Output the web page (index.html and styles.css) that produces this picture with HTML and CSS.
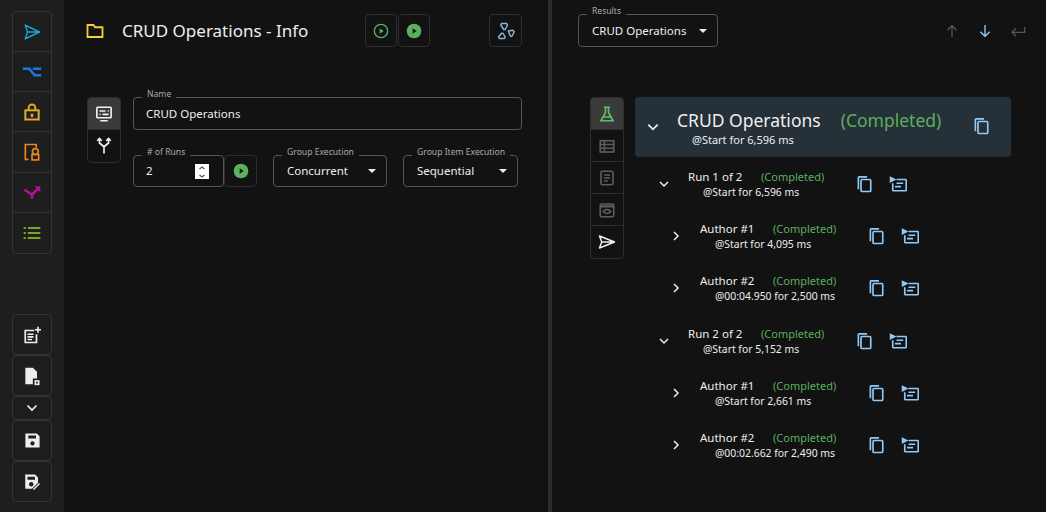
FILE: index.html
```html
<!DOCTYPE html>
<html lang="en">
<head>
  <meta charset="UTF-8">
  <title>CRUD Operations - Info</title>
  <link rel="stylesheet" href="styles.css">
</head>
<body>
  <aside class="sidebar">
    <div class="btn-stack">
      <button class="side-btn"><svg width="18" height="18" viewBox="0 0 24 24" fill="none" stroke="#1da1d6" stroke-width="1.9" stroke-linejoin="round"><path d="M3 3l19 9-19 9 3-9zM6 12h16"/></svg></button>
      <button class="side-btn"><svg width="20" height="20" viewBox="0 0 24 24" fill="none" stroke="#1976e0" stroke-width="3"><path d="M1 8h8l6 8h8M13 8h10"/></svg></button>
      <button class="side-btn"><svg width="20" height="20" viewBox="0 0 24 24" fill="none" stroke="#e0a92e" stroke-width="2.400"><rect x="4" y="10" width="16" height="11"/><path d="M8 10V7a4 4 0 0 1 8 0v3"/><path d="M12 14v4" stroke-width="3"/></svg></button>
      <button class="side-btn tall"><svg width="20" height="20" viewBox="0 0 24 24" fill="none" stroke="#e8861a" stroke-width="2"><path d="M8 21H4V3h13v4"/><circle cx="16" cy="11.500" r="3.500"/><rect x="12" y="15" width="8" height="6.500"/></svg></button>
      <button class="side-btn"><svg width="20" height="20" viewBox="0 0 24 24" fill="none" stroke="#b5109a" stroke-width="3"><path d="M3 8l9 6v5M12 14l8-8"/><path d="M15 4h7v7z" fill="#b5109a" stroke="none"/></svg></button>
      <button class="side-btn"><svg width="20" height="20" viewBox="0 0 24 24" fill="none" stroke="#7fa51c" stroke-width="2.400"><path d="M7 6h15M7 12h15M7 18h15M2 6h2.500M2 12h2.500M2 18h2.500"/></svg></button>
    </div>
    <div class="side-bottom">
      <button class="side-btn single"><svg width="18" height="18" viewBox="0 0 24 24" fill="none" stroke="#eee" stroke-width="2.200"><path d="M15 6H3v16h15V11M6 11h8M6 14.500h8M6 18h6M20 1v8M16 5h8"/></svg></button>
      <button class="side-btn single"><svg width="20" height="20" viewBox="0 0 24 24" fill="#eee"><path d="M4 2h9l5 5v8h-5v7H4z"/><path d="M15 17h6v6h-6z"/><path d="M17 19h2v2h-2z" fill="#1e1e1e"/></svg></button>
      <button class="side-btn single short"><svg width="12" height="12" viewBox="0 0 24 24" fill="none" stroke="#eee" stroke-width="3.400"><path d="M3 7l9 9 9-9"/></svg></button>
      <button class="side-btn single"><svg width="17" height="17" viewBox="0 0 24 24" fill="#eee"><path fill-rule="evenodd" d="M2 2h16l4 4v16H2zM6 5v4h11V5zM12 13a3 3 0 1 0 .01 0z"/></svg></button>
      <button class="side-btn single"><svg width="18" height="18" viewBox="0 0 24 24" fill="#eee"><path fill-rule="evenodd" d="M3 2h13l4 4v7l-8 8H3zM6 5v4h10V5zM11 12a3 3 0 1 0 .01 0z"/><path d="M14 22l8-8" stroke="#eee" stroke-width="2"/></svg></button>
    </div>
  </aside>

  <main class="panel left">
    <header class="left-head">
      <svg class="folder" width="18" height="18" viewBox="0 0 24 24" fill="none" stroke="#f2d03c" stroke-width="2.400"><path d="M2 4h8l2 3h10v13H2z"/></svg>
      <h1>CRUD Operations - Info</h1>
      <div class="run-btns">
        <button class="icon-btn"><svg width="16" height="16" viewBox="0 0 24 24" fill="none" stroke="#5cb060" stroke-width="2"><circle cx="12" cy="12" r="10"/><path d="M10 8l6 4-6 4z" fill="#5cb060" stroke="none"/></svg></button>
        <button class="icon-btn"><svg width="16" height="16" viewBox="0 0 24 24"><circle cx="12" cy="12" r="11" fill="#5cb060"/><path d="M10 8l6 4-6 4z" fill="#121212"/></svg></button>
      </div>
      <button class="icon-btn graph"><svg width="18" height="18" viewBox="0 0 24 24" fill="none" stroke="#8ab8dc" stroke-width="1.900" stroke-linejoin="round"><path d="M6 2h7l1 2-3 6H9L5 4zM6 15h2l3 5-1 2H3l-1-2zM15 12l6-1 2 2-3 6h-2z"/></svg></button>
    </header>

    <div class="left-body">
      <div class="tab-stack small">
        <button class="tab active"><svg width="18" height="18" viewBox="0 0 24 24" fill="none" stroke="#f0f0f0" stroke-width="2.200"><rect x="2.500" y="3" width="19" height="14" rx="1"/><path d="M6 8h8M17 8h1.500M6 12.500h1.500M10 12.500h8M7 21h10"/></svg></button>
        <button class="tab"><svg width="18" height="18" viewBox="0 0 24 24" fill="none" stroke="#f0f0f0" stroke-width="2.200"><path d="M12 22v-9L6 8V3M12 13l6-5V3M3 5l3-3 3 3M15 5l3-3 3 3"/></svg></button>
      </div>
      <div class="form">
        <div class="field name"><span class="legend">Name</span><span class="value">CRUD Operations</span></div>
        <div class="form-row">
          <div class="runs">
            <div class="field count">
              <span class="legend">&#35; of Runs</span>
              <span class="value">2</span>
              <span class="spinner"><svg width="8" height="14" viewBox="0 0 8 14" fill="none" stroke="#555" stroke-width="1.200"><path d="M1.500 4l2.500-2 2.500 2M1.500 10l2.500 2 2.500-2"/></svg></span>
            </div>
            <button class="icon-btn run-go"><svg width="16" height="16" viewBox="0 0 24 24"><circle cx="12" cy="12" r="11" fill="#5cb060"/><path d="M10 8l6 4-6 4z" fill="#121212"/></svg></button>
          </div>
          <div class="field select group"><span class="legend">Group Execution</span><span class="value">Concurrent</span><i class="caret"></i></div>
          <div class="field select item"><span class="legend">Group Item Execution</span><span class="value">Sequential</span><i class="caret"></i></div>
        </div>
      </div>
    </div>
  </main>

  <div class="splitter"></div>

  <section class="panel right">
    <header class="right-head">
      <div class="field select results"><span class="legend">Results</span><span class="value">CRUD Operations</span><i class="caret"></i></div>
      <div class="nav">
        <svg width="16" height="16" viewBox="0 0 24 24" fill="none" stroke="#555" stroke-width="2"><path d="M12 21V4M5 11l7-7 7 7"/></svg>
        <svg width="16" height="16" viewBox="0 0 24 24" fill="none" stroke="#90caf9" stroke-width="2"><path d="M12 3v17M5 13l7 7 7-7"/></svg>
        <svg width="16" height="16" viewBox="0 0 24 24" fill="none" stroke="#555" stroke-width="2"><path d="M22 6v8H3M9 8l-6 6 6 6"/></svg>
      </div>
    </header>

    <div class="right-body">
      <div class="tab-stack">
        <button class="tab active"><svg width="18" height="18" viewBox="0 0 24 24" fill="none" stroke="#66bb6a" stroke-width="2.200"><path d="M8 3h8M10 3v7l-6 11h16l-6-11V3M7 16h10"/></svg></button>
        <button class="tab"><svg width="18" height="18" viewBox="0 0 24 24" fill="none" stroke="#5c5c5c" stroke-width="2.200"><rect x="3" y="5" width="18" height="15"/><path d="M3 10h18M3 15h18M8.500 5v15"/></svg></button>
        <button class="tab"><svg width="18" height="18" viewBox="0 0 24 24" fill="none" stroke="#5c5c5c" stroke-width="2.200"><rect x="4" y="3" width="16" height="18" rx="2"/><path d="M8 8h8M8 12h8M8 16h5"/></svg></button>
        <button class="tab"><svg width="18" height="18" viewBox="0 0 24 24" fill="none" stroke="#5c5c5c" stroke-width="2.200"><rect x="3" y="4" width="18" height="17" rx="2"/><path d="M3 7h18" stroke-width="3"/><path d="M7 14c3-3.500 7-3.500 10 0-3 3.500-7 3.500-10 0z"/></svg></button>
        <button class="tab"><svg width="18" height="18" viewBox="0 0 24 24" fill="none" stroke="#f0f0f0" stroke-width="2" stroke-linejoin="round"><path d="M2 4l20 8-20 8 3-8zM5 12h17"/></svg></button>
      </div>

      <div class="tree">
        <div class="tree-top">
          <svg class="chev" width="14" height="14" viewBox="0 0 24 24"><path d="M4 8l8 8 8-8"/></svg>
          <div class="top-text">
            <div class="top-line"><span class="top-name">CRUD Operations</span><span class="top-status">(Completed)</span></div>
            <div class="top-time">@Start for 6,596 ms</div>
          </div>
          <svg class="copy top-copy" width="18" height="18" viewBox="0 0 24 24"><use href="#copy"/></svg>
        </div>

        <div class="row run">
          <svg class="chev" width="12" height="12" viewBox="0 0 24 24"><path d="M4 8l8 8 8-8"/></svg>
          <div class="row-text"><div class="row-line"><span class="row-name">Run 1 of 2</span><span class="status">(Completed)</span></div><div class="time">@Start for 6,596 ms</div></div>
          <svg class="copy" width="18" height="18" viewBox="0 0 24 24"><use href="#copy"/></svg>
          <svg class="open" width="18" height="18" viewBox="0 0 24 24"><use href="#open"/></svg>
        </div>
        <div class="row author">
          <svg class="chev" width="12" height="12" viewBox="0 0 24 24"><path d="M8 4l8 8-8 8"/></svg>
          <div class="row-text"><div class="row-line"><span class="row-name">Author #1</span><span class="status">(Completed)</span></div><div class="time">@Start for 4,095 ms</div></div>
          <svg class="copy" width="18" height="18" viewBox="0 0 24 24"><use href="#copy"/></svg>
          <svg class="open" width="18" height="18" viewBox="0 0 24 24"><use href="#open"/></svg>
        </div>
        <div class="row author">
          <svg class="chev" width="12" height="12" viewBox="0 0 24 24"><path d="M8 4l8 8-8 8"/></svg>
          <div class="row-text"><div class="row-line"><span class="row-name">Author #2</span><span class="status">(Completed)</span></div><div class="time">@00:04.950 for 2,500 ms</div></div>
          <svg class="copy" width="18" height="18" viewBox="0 0 24 24"><use href="#copy"/></svg>
          <svg class="open" width="18" height="18" viewBox="0 0 24 24"><use href="#open"/></svg>
        </div>
        <div class="row run">
          <svg class="chev" width="12" height="12" viewBox="0 0 24 24"><path d="M4 8l8 8 8-8"/></svg>
          <div class="row-text"><div class="row-line"><span class="row-name">Run 2 of 2</span><span class="status">(Completed)</span></div><div class="time">@Start for 5,152 ms</div></div>
          <svg class="copy" width="18" height="18" viewBox="0 0 24 24"><use href="#copy"/></svg>
          <svg class="open" width="18" height="18" viewBox="0 0 24 24"><use href="#open"/></svg>
        </div>
        <div class="row author">
          <svg class="chev" width="12" height="12" viewBox="0 0 24 24"><path d="M8 4l8 8-8 8"/></svg>
          <div class="row-text"><div class="row-line"><span class="row-name">Author #1</span><span class="status">(Completed)</span></div><div class="time">@Start for 2,661 ms</div></div>
          <svg class="copy" width="18" height="18" viewBox="0 0 24 24"><use href="#copy"/></svg>
          <svg class="open" width="18" height="18" viewBox="0 0 24 24"><use href="#open"/></svg>
        </div>
        <div class="row author">
          <svg class="chev" width="12" height="12" viewBox="0 0 24 24"><path d="M8 4l8 8-8 8"/></svg>
          <div class="row-text"><div class="row-line"><span class="row-name">Author #2</span><span class="status">(Completed)</span></div><div class="time">@00:02.662 for 2,490 ms</div></div>
          <svg class="copy" width="18" height="18" viewBox="0 0 24 24"><use href="#copy"/></svg>
          <svg class="open" width="18" height="18" viewBox="0 0 24 24"><use href="#open"/></svg>
        </div>
      </div>
    </div>
  </section>

  <svg class="defs" width="0" height="0">
    <symbol id="copy" viewBox="0 0 24 24"><rect x="8" y="6" width="13" height="16" rx="1.500" fill="none" stroke="#90caf9" stroke-width="2.200"/><path d="M4.500 19V3.500a1 1 0 0 1 1-1H16" fill="none" stroke="#90caf9" stroke-width="2.200"/></symbol>
    <symbol id="open" viewBox="0 0 24 24"><path d="M10 6h12a1 1 0 0 1 1 1v13a1 1 0 0 1-1 1H6a1 1 0 0 1-1-1V11" fill="none" stroke="#90caf9" stroke-width="2.200"/><path d="M1 1.500l9 4.500-9 4.500z" fill="#90caf9"/><path d="M10 11h9M8 15.500h8" stroke="#90caf9" stroke-width="2.200"/></symbol>
  </svg>
</body>
</html>
```

FILE: styles.css
```css
* {
  box-sizing: border-box;
}
html, body {
  height: 100%;
}
body {
  margin: 0;
  display: flex;
  height: 512px;
  overflow: hidden;
  background: #121212;
  color: #eee;
  font-family: "Noto Sans", "Open Sans", sans-serif;
  font-size: 11px;
}
button {
  display: flex;
  align-items: center;
  justify-content: center;
  padding: 0;
  background: none;
  border: 0;
}
.defs {
  position: absolute;
}

/* left strip */
.sidebar {
  flex: 0 0 64px;
  display: flex;
  flex-direction: column;
  justify-content: space-between;
  padding: 11px 0 10px 12px;
  background: #1e1e1e;
}
.btn-stack {
  display: flex;
  flex-direction: column;
  width: 40px;
  border: 1px solid #333;
  border-radius: 4px;
}
.side-btn {
  height: 40px;
  border-bottom: 1px solid #333;
}
.side-btn:last-child {
  border-bottom: 0;
}
.side-btn.tall {
  height: 41px;
}
.side-bottom {
  display: flex;
  flex-direction: column;
}
.side-btn.single {
  width: 40px;
  height: 41px;
  border: 1px solid #333;
  border-radius: 4px;
}
.side-btn.short {
  height: 24px;
}

.panel {
  display: flex;
  flex-direction: column;
}
.left {
  flex: 0 0 484px;
}
.splitter {
  flex: 0 0 4px;
  background: #2c2c2c;
}
.right {
  flex: 1;
}

/* headers */
.left-head {
  display: flex;
  align-items: center;
  height: 61px;
  padding-left: 22px;
}
.left-head h1 {
  margin: 0 0 0 18px;
  width: 243px;
  font-size: 17px;
  font-weight: 400;
}
.run-btns {
  display: flex;
  gap: 1px;
}
.icon-btn {
  width: 32px;
  height: 33px;
  border: 1px solid #2e2e2e;
  border-radius: 4px;
}
.graph {
  width: 33px;
  margin-left: 59px;
}
.right-head {
  display: flex;
  align-items: center;
  justify-content: space-between;
  height: 61px;
  padding: 0 20px 0 26px;
}
.nav {
  display: flex;
  gap: 17px;
}

/* outlined fields */
.field {
  position: relative;
  display: flex;
  align-items: center;
  height: 33px;
  padding-left: 13px;
  border: 1px solid #555;
  border-radius: 4px;
  font-size: 11.500px;
}
/* the background band cuts the notch in the outline behind the label */
.legend {
  position: absolute;
  top: -10px;
  left: 8px;
  padding: 0 5px;
  background: linear-gradient(transparent 8px, #121212 8px, #121212 11px, transparent 11px);
  color: #aaa;
  font-size: 8.600px;
  line-height: 12px;
}
.value {
  line-height: 16px;
}
.caret {
  position: absolute;
  right: 10px;
  top: 14px;
  border: 4px solid transparent;
  border-top-color: #eee;
  border-bottom: 0;
}

/* left form */
.left-body {
  display: flex;
  gap: 12px;
  padding: 36px 0 0 23px;
}
.tab-stack {
  display: flex;
  flex-direction: column;
  width: 34px;
  align-self: flex-start;
  border: 1px solid #2e2e2e;
  border-radius: 4px;
  overflow: hidden;
}
.tab {
  height: 32px;
  border-bottom: 1px solid #2e2e2e;
}
.tab:last-child {
  border-bottom: 0;
}
.tab.active {
  background: #3a3a3a;
}
.form {
  flex: 0 0 389px;
}
.name,
.count {
  padding-left: 12px;
}
.form-row {
  display: flex;
  margin-top: 25px;
}
.form-row .field,
.run-go {
  height: 32px;
}
.form-row .caret {
  top: 13px;
}
.runs {
  display: flex;
}
.count {
  width: 91px;
}
.run-go {
  width: 33px;
}
.spinner {
  position: absolute;
  right: 14px;
  top: 8px;
  display: flex;
  align-items: center;
  justify-content: center;
  width: 14px;
  height: 15px;
  background: #fff;
}
.group {
  width: 114px;
  margin-left: 16px;
}
.item {
  width: 115px;
  margin-left: 16px;
}

/* results */
.results {
  width: 140px;
}
.right-body {
  display: flex;
  gap: 11px;
  padding: 36px 0 0 38px;
}
.tree {
  width: 376px;
}
.tree-top {
  position: relative;
  display: flex;
  height: 60px;
  padding: 11px 0 0 11px;
  background: #253038;
  border-radius: 4px;
}
.chev {
  flex: none;
  fill: none;
  stroke: #eee;
  stroke-width: 3;
}
.tree-top .chev {
  margin-top: 12px;
}
.top-text {
  margin-left: 17px;
}
.top-line {
  display: flex;
  gap: 20px;
  align-items: baseline;
}
.top-name,
.top-status {
  font-size: 17.500px;
}
.top-status {
  color: #5cae60;
}
.top-time {
  margin: 1px 0 0 15px;
  line-height: 14px;
}
.top-copy {
  position: absolute;
  top: 20px;
  left: 337px;
}
.row {
  display: flex;
  align-items: center;
  height: 52px;
}
.row.run {
  padding-left: 23px;
}
.row.author {
  padding-left: 35px;
}
.tree-top + .row {
  margin-top: 1px;
}
.row.run:nth-child(5) {
  margin-top: 1px;
}
.row-text {
  flex: 0 0 167px;
  margin-left: 18px;
  white-space: nowrap;
}
.row-line {
  display: flex;
}
.row-name {
  width: 73px;
  font-size: 11.500px;
}
.status {
  color: #5cae60;
}
.time {
  margin: 1px 0 0 15px;
  font-size: 10.400px;
}
.open {
  margin-left: 16px;
}
```
